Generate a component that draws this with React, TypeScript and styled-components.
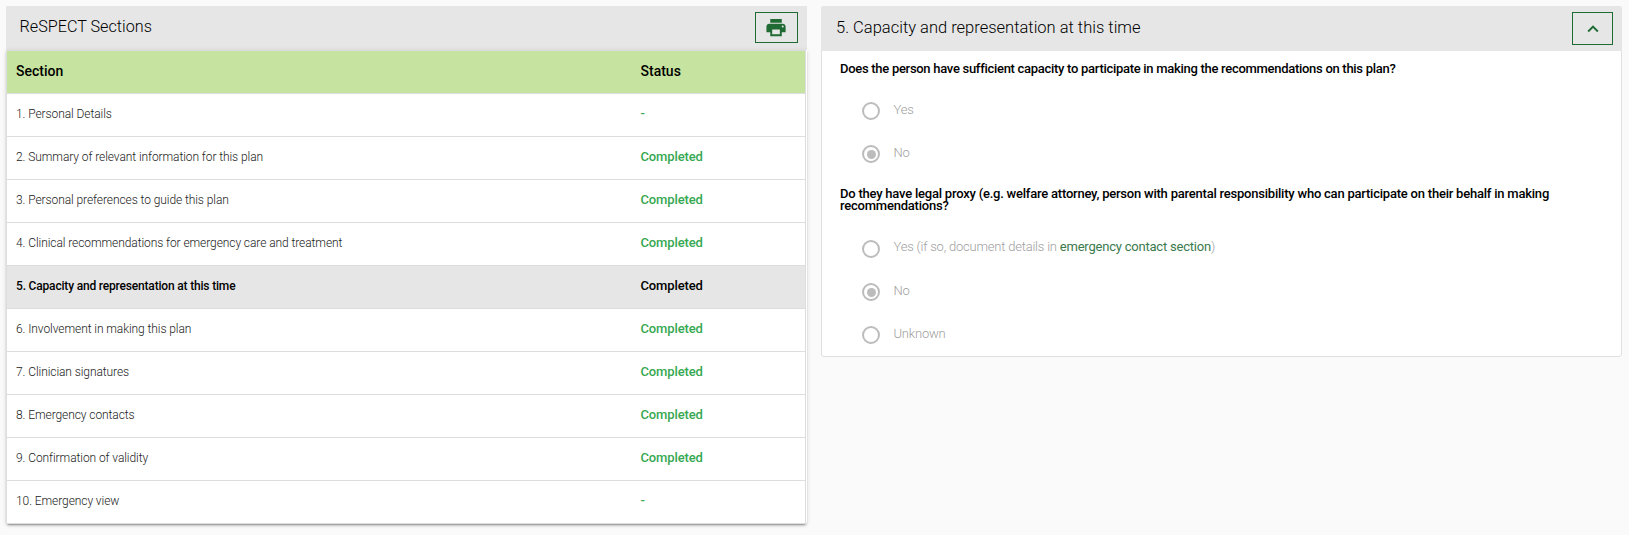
import React from 'react';
import styled, { createGlobalStyle } from 'styled-components';

const GREEN = '#1f6b33';

const GlobalStyle = createGlobalStyle`
  * { box-sizing: border-box; }
  body {
    margin: 0;
    background: #fafafa;
    font-family: Roboto, "Liberation Sans", sans-serif;
    font-weight: 300;
  }
`;

const Page = styled.main`
  display: grid;
  grid-template-columns: 801px 801px;
  gap: 14px;
  align-items: start;
  padding: 6px;
`;

const SectionsPanel = styled.section`
  display: flex;
  flex-direction: column;
`;

const SectionsHeader = styled.header`
  display: flex;
  justify-content: space-between;
  align-items: flex-start;
  height: 44px;
  padding: 6px 9px 0 13.5px;
  background: #e6e6e6;
`;

const PanelTitle = styled.h2<{ $size: number; $top: number }>`
  margin: 0;
  padding-top: ${p => p.$top}px;
  font-size: ${p => p.$size}px;
  font-weight: 300;
  line-height: 20px;
  color: #000;
`;

const OutlineButton = styled.button<{ $w: number; $h: number }>`
  display: flex;
  align-items: center;
  justify-content: center;
  width: ${p => p.$w}px;
  height: ${p => p.$h}px;
  padding: 0;
  border: 1px solid ${GREEN};
  background: transparent;
  color: ${GREEN};
`;

const TableCard = styled.div`
  padding-right: 1px;
  background: #fff;
  border-radius: 0 0 3px 3px;
  box-shadow: 0 3px 1px -2px rgba(0, 0, 0, 0.2), 0 2px 2px 0 rgba(0, 0, 0, 0.14),
    0 1px 5px 0 rgba(0, 0, 0, 0.12);
`;

const Table = styled.div`
  border: 1px solid #ddd;
  border-bottom: 0;
`;

const Row = styled.div<{ $active?: boolean; $head?: boolean }>`
  display: grid;
  grid-template-columns: 624.5px 1fr;
  align-items: center;
  height: 43px;
  padding: 0 0 3px 9px;
  border-bottom: 1px solid #ddd;
  background: ${p => (p.$head ? '#c6e49f' : p.$active ? '#e6e6e6' : 'transparent')};
  color: ${p => (p.$head || p.$active ? '#000' : '#222')};
  font-size: ${p => (p.$head ? '14px' : '12px')};
  font-weight: ${p => (p.$head || p.$active ? 500 : 300)};
  letter-spacing: ${p => (p.$head ? '0' : p.$active ? '-0.18px' : '-0.08px')};
`;

const Status = styled.span<{ $active?: boolean }>`
  font-size: 13px;
  font-weight: 500;
  letter-spacing: -0.12px;
  color: ${p => (p.$active ? '#000' : '#36a852')};
`;

const HeadLabel = styled.span``;

const DetailPanel = styled.section`
  height: 351px;
  border: 1px solid #e0e0e0;
  border-radius: 3px;
  background: #fff;
`;

const DetailHeader = styled.header`
  display: flex;
  justify-content: space-between;
  align-items: flex-start;
  height: 45px;
  margin: -1px -1px 0;
  padding: 6px 9px 0 15px;
  border-radius: 3px 3px 0 0;
  background: #e6e6e6;
`;

const Question = styled.p<{ $top: number; $spacing: string }>`
  margin: 0;
  padding: ${p => p.$top}px 40px 0 18px;
  font-size: 13px;
  font-weight: 500;
  line-height: 12px;
  letter-spacing: ${p => p.$spacing};
  color: #000;
`;

const Options = styled.div<{ $top: number }>`
  display: flex;
  flex-direction: column;
  gap: 25px;
  padding: ${p => p.$top}px 0 0 40px;
`;

const Option = styled.label<{ $lift?: number }>`
  display: flex;
  align-items: center;
  gap: 13.5px;
  height: 18px;
  font-size: 13px;
  letter-spacing: -0.21px;
  color: #a0a0a0;
  white-space: nowrap;

  > span:last-child {
    padding-bottom: ${p => p.$lift ?? 4}px;
  }
`;

const Radio = styled.span<{ $on?: boolean }>`
  display: flex;
  align-items: center;
  justify-content: center;
  width: 18px;
  height: 18px;
  border: 2px solid #bcbcbc;
  border-radius: 50%;

  &::after {
    content: '';
    width: 9px;
    height: 9px;
    border-radius: 50%;
    background: ${p => (p.$on ? '#bcbcbc' : 'transparent')};
  }
`;

const SectionLink = styled.a`
  color: #3b7a4d;
  font-weight: 400;
`;

const sections: [string, string][] = [
  ['1. Personal Details', '-'],
  ['2. Summary of relevant information for this plan', 'Completed'],
  ['3. Personal preferences to guide this plan', 'Completed'],
  ['4. Clinical recommendations for emergency care and treatment', 'Completed'],
  ['5. Capacity and representation at this time', 'Completed'],
  ['6. Involvement in making this plan', 'Completed'],
  ['7. Clinician signatures', 'Completed'],
  ['8. Emergency contacts', 'Completed'],
  ['9. Confirmation of validity', 'Completed'],
  ['10. Emergency view', '-'],
];

const PrintIcon = () => (
  <svg width="23" height="23" viewBox="0.5 0 24 24" fill="currentColor">
    <path d="M19 8H5c-1.66 0-3 1.34-3 3v6h4v4h12v-4h4v-6c0-1.66-1.34-3-3-3zm-3 11H8v-5h8v5zm3-7c-.55 0-1-.45-1-1s.45-1 1-1 1 .45 1 1-.45 1-1 1zm-1-9H6v4h12V3z" />
  </svg>
);

const ChevronUpIcon = () => (
  <svg width="22" height="22" viewBox="0 0 24 24" fill="currentColor">
    <path d="M7.41 15.41L12 10.83l4.59 4.58L18 14l-6-6-6 6z" />
  </svg>
);

export default function App() {
  return (
    <>
      <GlobalStyle />
      <Page>
        <SectionsPanel>
          <SectionsHeader>
            <PanelTitle $size={16.2} $top={5}>ReSPECT Sections</PanelTitle>
            <OutlineButton $w={43} $h={31} aria-label="Print">
              <PrintIcon />
            </OutlineButton>
          </SectionsHeader>
          <TableCard>
            <Table>
              <Row $head>
                <HeadLabel>Section</HeadLabel>
                <HeadLabel>Status</HeadLabel>
              </Row>
              {sections.map(([name, status], i) => (
                <Row key={name} $active={i === 4}>
                  <span>{name}</span>
                  <Status $active={i === 4}>{status}</Status>
                </Row>
              ))}
            </Table>
          </TableCard>
        </SectionsPanel>

        <DetailPanel>
          <DetailHeader>
            <PanelTitle $size={16.5} $top={6}>5. Capacity and representation at this time</PanelTitle>
            <OutlineButton $w={41} $h={33} aria-label="Collapse">
              <ChevronUpIcon />
            </OutlineButton>
          </DetailHeader>
          <Question $top={12} $spacing="-0.29px">
            Does the person have sufficient capacity to participate in making the recommendations on this plan?
          </Question>
          <Options $top={27}>
            <Option><Radio /><span>Yes</span></Option>
            <Option><Radio $on /><span>No</span></Option>
          </Options>
          <Question $top={25} $spacing="-0.22px">
            Do they have legal proxy (e.g. welfare attorney, person with parental responsibility who can participate on
            their behalf in making recommendations?
          </Question>
          <Options $top={28}>
            <Option $lift={6}>
              <Radio />
              <span>
                Yes (if so, document details in <SectionLink>emergency contact section</SectionLink>)
              </span>
            </Option>
            <Option><Radio $on /><span>No</span></Option>
            <Option><Radio /><span>Unknown</span></Option>
          </Options>
        </DetailPanel>
      </Page>
    </>
  );
}
